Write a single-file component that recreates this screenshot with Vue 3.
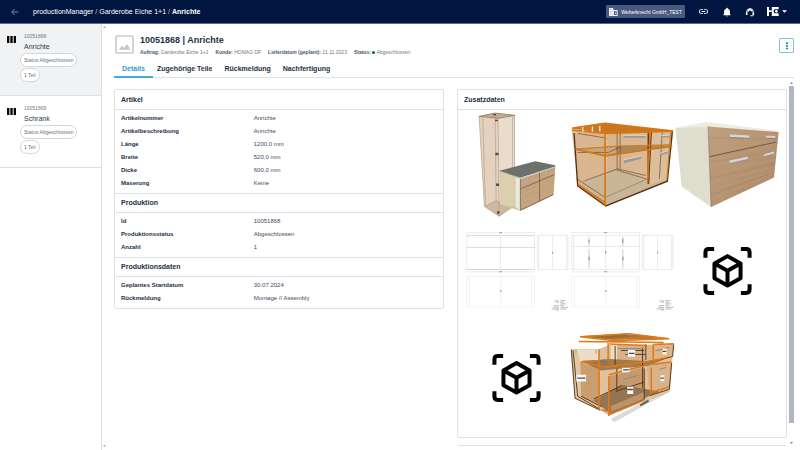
<script setup>
const parts = [
  { id: '10051868', name: 'Anrichte', status: 'Status:Abgeschlossen', count: '1 Teil', active: true },
  { id: '10051869', name: 'Schrank', status: 'Status:Abgeschlossen', count: '1 Teil', active: false },
]

const tabs = ['Details', 'Zugehörige Teile', 'Rückmeldung', 'Nachfertigung']

const sections = [
  {
    title: 'Artikel',
    rows: [
      ['Artikelnummer', 'Anrichte'],
      ['Artikelbeschreibung', 'Anrichte'],
      ['Länge', '1200,0 mm'],
      ['Breite', '520,0 mm'],
      ['Dicke', '600,0 mm'],
      ['Maserung', 'Keine'],
    ],
  },
  {
    title: 'Produktion',
    rows: [
      ['Id', '10051868'],
      ['Produktionsstatus', 'Abgeschlossen'],
      ['Anzahl', '1'],
    ],
  },
  {
    title: 'Produktionsdaten',
    rows: [
      ['Geplantes Startdatum', '30.07.2024'],
      ['Rückmeldung', 'Montage // Assembly'],
    ],
  },
]
</script>

<template>
  <div class="app">
    <header class="topbar">
      <a class="back" href="#" aria-label="Zurück">
        <svg viewBox="0 0 24 24" width="8" height="8"><path d="M22 12H3M11 3l-9 9 9 9" fill="none" stroke="#8f9ab2" stroke-width="2.6" /></svg>
      </a>
      <nav class="crumbs">
        <a href="#">productionManager</a><span>/</span><a href="#">Garderobe Eiche 1+1</a><span>/</span><b>Anrichte</b>
      </nav>
      <button class="tenant" type="button">
        <svg viewBox="0 0 27 24" width="9" height="8">
          <path d="M0 0h13v6h13v18H0z" fill="#e9ecf2" />
          <path d="M15 9h8v12h-8z" fill="#55638a" />
          <path d="M3 4h2v2H3zM8 4h2v2H8zM3 9h2v2H3zM8 9h2v2H8zM3 14h2v2H3zM8 14h2v2H8zM3 19h2v2H3zM8 19h2v2H8z" fill="#b4bccd" />
          <path d="M18 11h3v2h-3zM18 16h3v2h-3z" fill="#e9ecf2" />
        </svg>
        Weberknecht GmbH_TEST
      </button>
      <div class="tools">
        <button type="button" aria-label="Link">
          <svg viewBox="0 0 24 24" width="11" height="11"><path fill="#fff" d="M3.9 12c0-1.71 1.39-3.1 3.1-3.1h4V7H7a5 5 0 0 0 0 10h4v-1.9H7A3.1 3.1 0 0 1 3.9 12M8 13h8v-2H8v2m9-6h-4v1.9h4a3.1 3.1 0 0 1 0 6.2h-4V17h4a5 5 0 0 0 0-10" /></svg>
        </button>
        <button type="button" aria-label="Benachrichtigungen">
          <svg viewBox="0 0 24 24" width="10" height="10"><path fill="#fff" d="M21 19v1H3v-1l2-2v-6c0-3.1 2.03-5.83 5-6.71V4a2 2 0 0 1 4 0v.29c2.97.88 5 3.61 5 6.71v6l2 2m-7 2a2 2 0 0 1-4 0" /></svg>
        </button>
        <button type="button" aria-label="Support">
          <svg viewBox="0 0 24 24" width="10" height="10">
            <path d="M4 16v-4a8 8 0 0 1 16 0v7q0 2-2 2h-5" fill="none" stroke="#fff" stroke-width="2.4" />
            <path d="M2 13h4v6H3q-1 0-1-2zM18 13h4v5q0 1-1 1h-3z" fill="#fff" />
            <path d="M6 12q5-1 6-5 2 4 6 4-1-7-6-7T6 12" fill="#fff" />
          </svg>
        </button>
        <button class="brand" type="button" aria-label="Konto">
          <svg viewBox="0 0 36 27" width="12" height="9">
            <path fill="#fff" d="M0 0h6v10h8V0h21v7H24q-4 0-4 6t4 6h11v8H14V15H6v12H0z" />
            <circle cx="28" cy="13" r="4" fill="#fff" />
            <path d="M14 0v27" stroke="#001641" stroke-width="1" />
          </svg>
          <svg viewBox="0 0 10 5" width="5" height="3"><path d="M0 0h10L5 5z" fill="#fff" /></svg>
        </button>
      </div>
    </header>

    <div class="body">
      <aside class="sidebar">
        <a v-for="p in parts" :key="p.id" href="#" class="item" :class="{ active: p.active }">
          <svg class="bars" viewBox="0 0 27 21" width="9" height="7"><path d="M0 0h7v21H0zM10 0h7v21h-7zM20 0h7v21h-7z" fill="#050505" /></svg>
          <span class="info">
            <small>{{ p.id }}</small>
            <span class="name">{{ p.name }}</span>
            <span class="pill">{{ p.status }}</span>
            <span class="pill">{{ p.count }}</span>
          </span>
        </a>
      </aside>

      <div class="gutter">
        <svg viewBox="0 0 6 4" width="3" height="2"><path d="M0 4l3-4 3 4z" fill="#aaa" /></svg>
        <svg viewBox="0 0 6 4" width="3" height="2"><path d="M0 0h6L3 4z" fill="#aaa" /></svg>
      </div>

      <main class="main">
        <div class="head">
          <svg class="thumb" viewBox="0 0 57 57" width="19" height="19">
            <rect x="3" y="3" width="51" height="51" rx="4" fill="#fff" stroke="#cbcbcb" stroke-width="5" />
            <path d="M12 44l9-12 6 7 9-11 11 16z" fill="#c6c6c6" />
          </svg>
          <div class="headline">
            <h1>10051868 | Anrichte</h1>
            <div class="meta">
              <span><b>Auftrag:</b> Garderobe Eiche 1+1</span>
              <span><b>Kunde:</b> HOMAG DF</span>
              <span><b>Lieferdatum (geplant):</b> 21.11.2023</span>
              <span><b>Status:</b> <i class="dot"></i> Abgeschlossen</span>
            </div>
          </div>
          <button class="more" type="button" aria-label="Mehr">
            <svg viewBox="0 0 6 24" width="2" height="8"><path d="M0 1h6v5H0zM0 9h6v5H0zM0 17h6v5H0z" fill="#1b8fb0" /></svg>
          </button>
        </div>

        <nav class="tabs">
          <a v-for="(t, i) in tabs" :key="t" href="#" :class="{ current: i === 0 }">{{ t }}</a>
        </nav>

        <div class="content">
          <div class="columns">
            <section class="card details">
              <template v-for="s in sections" :key="s.title">
                <h2>{{ s.title }}</h2>
                <div class="rows">
                  <table>
                    <tbody>
                      <tr v-for="r in s.rows" :key="r[0]">
                        <th scope="row">{{ r[0] }}</th>
                        <td>{{ r[1] }}</td>
                      </tr>
                    </tbody>
                  </table>
                </div>
              </template>
            </section>

            <div class="right">
              <section class="card">
                <h2>Zusatzdaten</h2>
                <div class="gallery">
                  <!-- Wardrobe frame with sideboard -->
                  <svg viewBox="12 18 315 318">
                    <path d="M57 34l48-10 59 6v270l-47 33-44-30z" fill="#e9d9c8" />
                    <path d="M57 34l57 6 3 293-44-30z" fill="#e4d1be" />
                    <path d="M114 40l50-8v270l-47 31z" fill="#eadccb" />
                    <path d="M73 303l35-16 55 14-46 32z" fill="#cfb7a1" />
                    <path d="M57 34l48-10 59 7-50 9z" fill="#c7ab90" stroke="#866c58" stroke-width="2" />
                    <path d="M57 34l16 269 44 30 46-32V31M114 40l3 293M105 25l3 262M68 40l8 260M73 303l35-16 55 14M157 36v262" fill="none" stroke="#a68c76" stroke-width="1.5" />
                    <path d="M105 44h8v5h-8zM106 143h9v7h-9zM108 235h9v7h-9zM111 318h7v7h-7zM99 27h9v4h-9z" fill="#59483e" />
                    <path d="M118 198l60 18 2 100-60-18z" fill="#cfc49f" />
                    <path d="M118 198l46 12v96l-44-9z" fill="#dccfae" />
                    <path d="M166 216l16 3v97l-16-10z" fill="#ebebdc" />
                    <path d="M118 197l107-29 60 12v5l-104 33z" fill="#6c716b" />
                    <path d="M181 218l104-35v4l-104 36z" fill="#c5cabf" />
                    <path d="M181 222l104-36-5 83-99 47z" fill="#c3a27e" />
                    <path d="M182 235l98-32M182 269l96-40M184 290l94-39M184 302l95-41" stroke="#cdae8b" stroke-width="3" opacity=".6" />
                    <path d="M181 251l102-43M238 203v86M181 222v93l98-47" fill="none" stroke="#67513d" stroke-width="2" />
                    <path d="M118 197l62 20M180 217v98" fill="none" stroke="#8e8b72" stroke-width="1.5" />
                  </svg>

                  <!-- Sideboard frame -->
                  <svg viewBox="27 -12 315 318">
                    <path d="M34 38l96-15 209 25-17 150-184 75-84-61z" fill="#e2c9ad" />
                    <path d="M42 52l92 0 1 215-82-56z" fill="#d9b690" />
                    <path d="M140 50l124 0v155l-124 58z" fill="#d8b48c" />
                    <path d="M54 211l119-45 148 30-184 74z" fill="#cbb597" />
                    <path d="M175 54l87-3v150l-87-35z" fill="#dbb892" />
                    <path d="M272 51l62-3-14 143-51 16z" fill="#dbbe9b" />
                    <path d="M46 100l128-7 161-3-64 13-136 21z" fill="#ab875f" />
                    <path d="M50 102l115-6 8 15-38 11z" fill="#cba57a" />
                    <path d="M37 40l98-14 204 20-69 6-132 3z" fill="#c87622" />
                    <path d="M52 112h93l38-18M53 55l86 14M49 190l84 55M76 196l96-35 85 20M171 55v110l92 28M180 52v112M306 52l-9 140" fill="none" stroke="#6b4c30" stroke-width="2" />
                    <path d="M68 199l102-36 90 29-124 54" fill="none" stroke="#8e8a77" stroke-width="2.5" />
                    <path d="M42 54l11 158 84 60 184-74 15-148M264 48v158M273 48l-8 157" fill="none" stroke="#57310f" stroke-width="4" />
                    <path d="M135 25v246M38 39l97-14 204 23M36 45l100 10 203-7M47 102l88 20 136-20 65-8M270 48l-8 157M54 208l82 55" fill="none" stroke="#d97511" stroke-width="5" />
                    <path d="M331 50l-11 140M47 103l125-10 160-4" fill="none" stroke="#d17a23" stroke-width="3" />
                    <path d="M68 36v14M97 34v16M119 33v16" stroke="#f2e5d1" stroke-width="4" />
                    <path d="M190 62h66v6h-66zM191 135l52-12v8l-52 13zM303 61h25v6h-25zM298 115l25-8v7l-25 8z" fill="#9b9b9b" />
                    <path d="M190 61h66M191 134l52-12M303 61h25M298 115l25-8" stroke="#e2e4e4" stroke-width="2" />
                  </svg>

                  <!-- Finished sideboard -->
                  <svg viewBox="21 -12 315 318">
                    <defs>
                      <linearGradient id="wood" x1="0" y1="0" x2="1" y2="1">
                        <stop offset="0" stop-color="#c0a07f" /><stop offset=".5" stop-color="#b59373" /><stop offset="1" stop-color="#a88767" />
                      </linearGradient>
                    </defs>
                    <path d="M22 38l98-6 9 243-88-61z" fill="#dfdece" />
                    <path d="M22 38l93-17 217 26-8 4-204-15z" fill="#edece0" />
                    <path d="M120 34l211 17-14 136-188 88z" fill="url(#wood)" />
                    <path d="M124 55l202 8M125 82l196-1M125 105l198-16M128 150l193-33M128 175l191-41M129 204l188-49M131 225l184-57M131 251l183-74" stroke="#c4a27f" stroke-width="2.5" opacity=".5" />
                    <path d="M124 68l200 4M127 141l194-31M128 190l190-46M130 239l184-68" stroke="#98765a" stroke-width="2" opacity=".35" />
                    <path d="M124 125l200-44" stroke="#745945" stroke-width="3" />
                    <path d="M120 34l9 241" stroke="#8d7358" stroke-width="2" />
                    <path d="M185 58l58 3v8l-58-3zM293 62l28 1v6l-28-1zM184 136l55-12v8l-54 13zM287 117l30-8v7l-30 9z" fill="#d3d5da" />
                    <path d="M185 67l58 3M293 69l28 1M185 145l54-12M287 125l30-8" stroke="#8a8078" stroke-width="2" />
                  </svg>

                  <!-- Technical drawings -->
                  <svg v-for="n in 2" :key="n" viewBox="12 -24 315 318">
                    <g fill="none" stroke="#e3e3e3" stroke-width="2">
                      <path d="M20 31h203v102H20zM20 23h203M20 140h203M19 19v9M223 19v9" />
                      <path d="M232 31h91v102h-91zM277 31v102M236 31v102M319 31v102" />
                      <path d="M20 154h203v91H20zM122 154v91M28 154v91M214 154v91" stroke="#ededed" />
                    </g>
                    <g v-if="n === 1" fill="none">
                      <path d="M20 32h203M20 67h203M19 133h204" stroke="#cacaca" stroke-width="2" />
                      <path d="M121 31v102" stroke="#e0e0e0" stroke-width="2" />
                    </g>
                    <g v-else fill="none">
                      <path d="M20 64h203M122 31v102M26 31v102" stroke="#e0e0e0" stroke-width="2" />
                      <path d="M72 35v30M72 72v58M173 35v30M173 72v58" stroke="#b5b5b5" stroke-width="2" />
                      <path d="M72 44v8M72 94v12M173 42v12M173 94v12M122 78v8" stroke="#8a8a8a" stroke-width="3" />
                    </g>
                    <path d="M117 23h9M117 140h9M122 194v6M277 80v6" stroke="#999" stroke-width="3" />
                    <path d="M282 227h14M300 226h15M288 231h8M300 231h11M300 236h18M282 241h14M300 241h10M279 246h17M300 246h24M274 251h22M300 251h18M286 254h10" stroke="#999" stroke-width="2" />
                  </svg>

                  <svg viewBox="0 0 315 318">
                    <g transform="translate(46 54)" fill="none" stroke="#000" stroke-width="12">
                      <path d="M45 68V52q0-10 10-10h16M151 42h16q10 0 10 10v16M177 147v16q0 10-10 10h-16M71 173H55q-10 0-10-10v-16" />
                      <path d="M111 63l39 22v44l-39 22-39-22V85zM72 85l39 22 39-22M111 107v44" stroke-linejoin="round" />
                    </g>
                  </svg>
                  <svg viewBox="0 0 315 318">
                    <g transform="translate(46 54)" fill="none" stroke="#000" stroke-width="12">
                      <path d="M45 68V52q0-10 10-10h16M151 42h16q10 0 10 10v16M177 147v16q0 10-10 10h-16M71 173H55q-10 0-10-10v-16" />
                      <path d="M111 63l39 22v44l-39 22-39-22V85zM72 85l39 22 39-22M111 107v44" stroke-linejoin="round" />
                    </g>
                  </svg>

                  <!-- Exploded sideboard -->
                  <svg viewBox="267 9 315 318">
                    <path d="M392 292l160-82 4 8-154 85z" fill="#d9dadb" />
                    <path d="M272 84l86 0 3 183-76-35z" fill="#e3c6a5" />
                    <path d="M357 84l30-12 193 0-12 140-182 71-25-17z" fill="#e0c19c" />
                    <path d="M290 85h65v60l-53-20z" fill="#efdcc5" />
                    <path d="M301 127l58 12v116l-56-30z" fill="#ca9f70" />
                    <path d="M388 72l110-1v52l-110 16z" fill="#d7b28a" />
                    <path d="M391 72h20v58l-20 8z" fill="#efdcc5" />
                    <path d="M502 71l78-3-3 37-75 15z" fill="#dfb486" />
                    <path d="M386 165l107-27v96l-107 48z" fill="#c69a6d" />
                    <path d="M498 130l76-8-5 78-60 22z" fill="#d9b288" />
                    <path d="M341 237l84-46 112 20-147 66z" fill="#967451" />
                    <path d="M304 122l84-8 110 6 66-10-60 24-140 14z" fill="#a5794a" />
                    <path d="M306 119l72-4 7 15-31 8z" fill="#8d775c" />
                    <path d="M393 270l99-36v-22l-99 42z" fill="#bd9469" />
                    <path d="M300 46l145-9 122 15-166 5z" fill="#c1762c" />
                    <path d="M306 48l130-8 40 5-92 8z" fill="#9d6938" />
                    <path d="M279 88l14 137 68 40M274 86l11 145 75 36M405 75v55M410 142v70M497 69v48M492 142v92l-102 45M580 70l-3 36-34 9M574 125l-7 79-58 19M411 209l80-26M341 233l84-40M303 225l63 32M487 80v120M422 88h70M436 100h60" fill="none" stroke="#553517" stroke-width="2.8" />
                    <path d="M296 61l254 3M300 47l145-9 122 15-165 6zM357 84v182M384 66v54M386 165v119M386 161l107-27M387 280l105-44M303 122l72 16 120-15 66-14M519 70v45M513 140v80M302 126l56-8M388 69l110 4M520 70l60-2M513 130l60-7M364 266l29 6M512 214l54-17" fill="none" stroke="#dc7b18" stroke-width="4.5" />
                    <path d="M429 175l46-13M413 82h70M526 89l40-10M537 145l20-6" stroke="#8c8c8c" stroke-width="3" />
                    <path d="M289 161h29v20h-29zM443 87h22v20h-22zM426 140h22v13h-22zM441 197h18v21h-18zM547 82h12v18h-12zM541 162h11v18h-11z" fill="#f8f8f8" />
                    <path d="M292 171h24M446 97h17M429 146h17M441 205h17M547 91h11M541 171h10" stroke="#4a4a4a" stroke-width="4" />
                    <path d="M480 252l25-14" stroke="#5b5b5b" stroke-width="6" />
                    <path d="M441 41h16M288 85v11M348 87v10" stroke="#9c9c9c" stroke-width="3" />
                  </svg>
                </div>
              </section>
              <section class="card next"></section>
            </div>
          </div>
          <div class="scroll">
            <svg viewBox="0 0 6 4" width="3" height="2"><path d="M0 4l3-4 3 4z" fill="#888" /></svg>
            <div class="handle"></div>
            <svg viewBox="0 0 6 4" width="3" height="2"><path d="M0 0h6L3 4z" fill="#888" /></svg>
          </div>
        </div>
      </main>
    </div>
  </div>
</template>

<style>
body {
  margin: 0;
  background: #fff;
}
</style>

<style scoped>
.app {
  display: flex;
  flex-direction: column;
  height: 100vh;
  overflow: hidden;
  font-family: "Liberation Sans", Arial, sans-serif;
  font-size: 6px;
  color: #1d3047;
}
.app * {
  box-sizing: border-box;
}
svg {
  display: block;
  flex: none;
}
a {
  color: inherit;
  text-decoration: none;
}
button {
  font: inherit;
  color: inherit;
  background: none;
  border: 0;
  padding: 0;
  display: flex;
  align-items: center;
  justify-content: center;
}
.topbar {
  flex: none;
  display: flex;
  align-items: center;
  height: 24px;
  padding: 0 13px 0 11px;
  background: #001641;
  border-bottom: 1px solid #5a6884;
  color: #fff;
}
.crumbs {
  display: flex;
  gap: 2px;
  margin-left: 14px;
  font-size: 7px;
  line-height: 10px;
  white-space: nowrap;
}
.crumbs span {
  color: #c3cad8;
}
.tenant {
  gap: 3px;
  height: 13px;
  margin-left: auto;
  padding: 0 3px;
  border-radius: 1px;
  background: #4a597e;
  color: #fff;
  font-size: 5px;
  white-space: nowrap;
}
.tools {
  display: flex;
  align-items: center;
  gap: 13px;
  margin-left: 13px;
}
.brand {
  gap: 3px;
  margin-left: -1px;
}
.body {
  flex: 1;
  display: flex;
  min-height: 0;
}
.sidebar {
  flex: none;
  width: 102px;
  border-right: 1px solid #dfe1e4;
}
.item {
  display: flex;
  gap: 4px;
  height: 72px;
  padding: 9px 8px 0 7px;
  border-bottom: 1px solid #dcdee2;
}
.item.active {
  background: #f1f2f4;
}
.bars {
  margin-top: 3px;
}
.info {
  display: flex;
  flex-direction: column;
  align-items: flex-start;
  gap: 1px;
}
.info small {
  padding-left: 4px;
  font-size: 5px;
  line-height: 7px;
  color: #6f7883;
}
.name {
  padding-left: 4px;
  font-size: 7px;
  line-height: 11px;
  color: #2c3b4d;
}
.pill {
  padding: 0 3px;
  border: 1px solid #d3d6da;
  border-radius: 7px;
  background: #fff;
  font-size: 5px;
  line-height: 12px;
  color: #6a7480;
  white-space: nowrap;
}
.gutter {
  flex: none;
  display: flex;
  flex-direction: column;
  justify-content: space-between;
  align-items: center;
  width: 5px;
  padding: 2px 0 3px;
}
.main {
  flex: 1;
  min-width: 0;
  display: flex;
  flex-direction: column;
  padding: 10px 6px 4px 7px;
}
.head {
  display: flex;
  align-items: flex-start;
}
.thumb {
  margin: 1px 6px 0 1px;
}
h1 {
  margin: 0;
  font-size: 9px;
  line-height: 13px;
}
.meta {
  display: flex;
  gap: 7px;
  margin-top: 2px;
  font-size: 5px;
  line-height: 7px;
  color: #6f7883;
  white-space: nowrap;
}
.meta b {
  color: #4c5a6a;
}
.dot {
  display: inline-block;
  width: 3px;
  height: 3px;
  border-radius: 50%;
  background: #0b6b1b;
}
.more {
  width: 15px;
  height: 15px;
  margin: 4px 0 0 auto;
  border: 1px solid #7cc6d6;
  border-radius: 1px;
}
.tabs {
  display: flex;
  gap: 12px;
  margin-top: 8px;
  padding-left: 8px;
  border-bottom: 1px solid #dfe1e4;
  font-size: 7px;
  font-weight: bold;
  line-height: 9px;
  white-space: nowrap;
}
.tabs a {
  position: relative;
  padding-bottom: 4px;
}
.tabs .current {
  color: #2ea3cd;
}
.tabs .current::after {
  content: "";
  position: absolute;
  left: -8px;
  right: -8px;
  bottom: -1px;
  height: 2px;
  background: #3fb0d3;
}
.content {
  flex: 1;
  display: flex;
  gap: 1px;
  min-height: 0;
  overflow: hidden;
}
.columns {
  flex: 1;
  display: grid;
  grid-template-columns: 1fr 1fr;
  align-items: start;
  gap: 13px;
  padding-top: 11px;
}
.card {
  border: 1px solid #dfe1e4;
  border-radius: 2px;
}
.card h2 {
  margin: 0;
  padding: 0 6px;
  border-bottom: 1px solid #dfe1e4;
  font-size: 7px;
  line-height: 19px;
}
.rows {
  padding: 2px 6px 3px;
}
.card .rows + h2 {
  border-top: 1px solid #dfe1e4;
  line-height: 18px;
}
table {
  width: 100%;
  border-collapse: collapse;
  table-layout: fixed;
}
th,
td {
  padding: 0;
  line-height: 13px;
  text-align: left;
}
th {
  width: 42%;
}
td {
  color: #3d4b5c;
}
.right {
  display: flex;
  flex-direction: column;
  gap: 7px;
}
.gallery {
  display: grid;
  grid-template-columns: repeat(3, 1fr);
  padding: 1px 6px 7px;
}
.gallery svg {
  width: 100%;
}
.next {
  height: 60px;
}
.scroll {
  flex: none;
  display: flex;
  flex-direction: column;
  align-items: center;
  width: 6px;
  padding: 4px 0 2px;
}
.handle {
  width: 5px;
  height: 337px;
  margin: 2px 0 auto;
  background: #b0b7c4;
}
</style>
